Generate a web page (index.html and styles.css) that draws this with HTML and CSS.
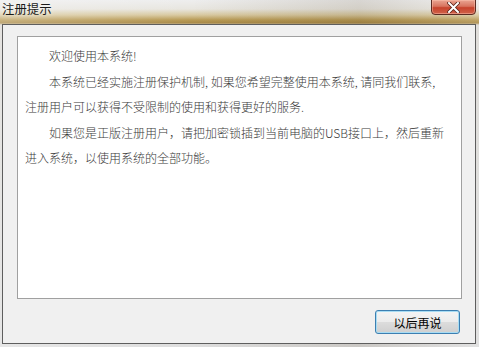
FILE: index.html
```html
<!DOCTYPE html>
<html lang="zh-CN">
<head>
  <meta charset="UTF-8" />
  <title>注册提示</title>
  <link rel="stylesheet" href="styles.css">
</head>
<body>
  <div class="window">
    <!-- Title bar -->
    <div class="titlebar">
      <span class="title">注册提示</span>
      <button class="close" aria-label="关闭">
        <svg width="13" height="11" viewBox="0 0 13 11">
          <path d="M2 1 L11 10 M11 1 L2 10" stroke="#5a2418" stroke-width="3.6" stroke-linecap="square"/>
          <path d="M2 1 L11 10 M11 1 L2 10" stroke="#ffffff" stroke-width="2" stroke-linecap="square"/>
        </svg>
      </button>
    </div>

    <!-- Client area -->
    <div class="client">
      <div class="msgbox">
        <p class="para">欢迎使用本系统!</p>
        <p class="para">本系统已经实施注册保护机制, 如果您希望完整使用本系统, 请同我们联系,<br>注册用户可以获得不受限制的使用和获得更好的服务.</p>
        <p class="para">如果您是正版注册用户，请把加密锁插到当前电脑的USB接口上，然后重新<br>进入系统，以使用系统的全部功能。</p>
      </div>
      <div class="actions">
        <button class="btn">以后再说</button>
      </div>
    </div>
  </div>
</body>
</html>
```

FILE: styles.css
```css
* {
  margin: 0;
  padding: 0;
  box-sizing: border-box;
}

body {
  width: 479px;
  height: 347px;
  overflow: hidden;
  font-family: "Noto Sans CJK SC", "Liberation Sans", sans-serif;
  background: #d9d6cf;
}

.window {
  width: 479px;
  height: 347px;
  display: flex;
  flex-direction: column;
  background:
    linear-gradient(to right, rgba(255,255,255,0.25), rgba(255,255,255,0) 40%, rgba(60,40,10,0.12) 75%, rgba(255,255,255,0.1)),
    linear-gradient(to bottom, #eeeeee 0px, #e8e6e0 9px, #d8c9a0 15px, #b89a55 20px, #a98a48 23px, #dcdad6 25px, #dedede 100%);
}

/* Title bar */
.titlebar {
  height: 24px;
  display: flex;
  justify-content: space-between;
  align-items: flex-start;
}

.title {
  margin: 1px 0 0 2px;
  font-size: 12.4px;
  line-height: 17px;
  color: #1a1a1a;
  text-shadow: 0 0 6px rgba(255,255,255,0.9);
}

.close {
  width: 45px;
  height: 16px;
  margin-top: -1px;
  margin-right: 3px;
  display: flex;
  align-items: center;
  justify-content: center;
  border: 1px solid #5b2b22;
  border-radius: 0 0 4px 4px;
  background: linear-gradient(to bottom, #eaa592 0%, #d8745f 45%, #c7432c 55%, #d0624a 100%);
  box-shadow: inset 0 0 0 1px rgba(255,200,180,0.45);
}

/* Client area */
.client {
  flex: 1;
  margin: 0 3px 3px 2px;
  border: 1px solid #5e5e5e;
  background: #f0f0f0;
  display: flex;
  flex-direction: column;
}

.msgbox {
  width: 445px;
  height: 263px;
  margin: 11px 0 0 14px;
  padding: 6px 4px 0 7px;
  border: 1px solid #a0a0a0;
  background: #ffffff;
}

.para {
  font-size: 12px;
  font-weight: 300;
  line-height: 25.5px;
  color: #3a3a3a;
  text-indent: 24px;
  white-space: nowrap;
}

.actions {
  display: flex;
  justify-content: flex-end;
  margin: 11px 15px 0 0;
}

.btn {
  width: 85px;
  height: 24px;
  font-family: "Noto Sans CJK SC", "Liberation Sans", sans-serif;
  font-size: 12px;
  color: #000;
  border: 1px solid #3c7fb1;
  border-radius: 3px;
  background: linear-gradient(to bottom, #f4f4f4 0%, #ececec 48%, #dcdcdc 52%, #cfcfcf 100%);
  box-shadow: inset 0 0 0 1px #a8dcf3;
}
```
